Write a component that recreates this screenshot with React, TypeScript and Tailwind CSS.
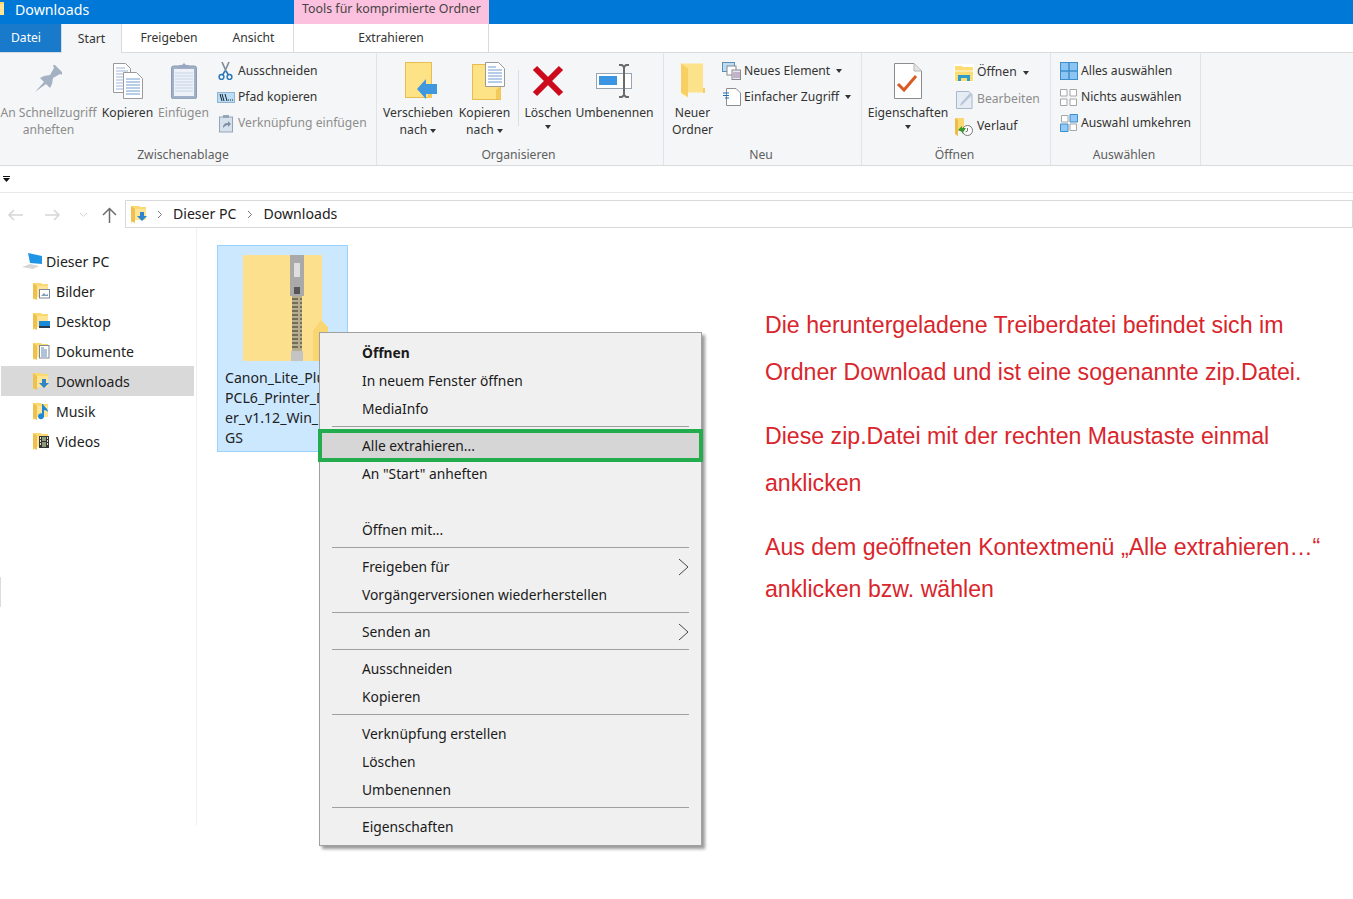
import React from "react";

function Folder({ w = 16, h = 18 }: { w?: number; h?: number }) {
  return (
    <svg width={w} height={h} viewBox="0 0 16 18">
      <path d="M0 1h8l1 1h6v13H4L0 18z" fill="#fbd971" />
      <path d="M0 1l4 3v14l-4-2z" fill="#f0c04e" />
      <path d="M4 4h11v11H4z" fill="#fde595" />
    </svg>
  );
}

function NavIcon({ kind }: { kind: string }) {
  return (
    <span className="relative inline-block w-[17px] h-[18px] shrink-0">
      <Folder />
      <svg className="absolute left-0 top-0" width="17" height="18" viewBox="0 0 17 18">
        {kind === "Bilder" && (<g><rect x="6.5" y="7.5" width="10" height="8.5" fill="#fff" stroke="#7c8894" /><path d="M8 14l3-3 2 2 2-1v2z" fill="#7f9fb8" /></g>)}
        {kind === "Desktop" && (<g><rect x="6" y="9" width="11" height="7" fill="#1a8ad8" /><rect x="6" y="14" width="11" height="2" fill="#233a50" /></g>)}
        {kind === "Dokumente" && (<g><rect x="6.5" y="3.5" width="9.5" height="12.5" fill="#fff" stroke="#7c8894" /><path d="M8 6h3M8 8h6M8 10h6M8 12h6M8 14h6" stroke="#5c88b0" /></g>)}
        {kind === "Downloads" && (<path d="M9 7h4v4h3l-5 5-5-5h3z" fill="#2f84d0" />)}
        {kind === "Musik" && (<path d="M9 2l1 0c1 3 5 4 5 8-1-1-2-2-4-2v6a3 3 0 1 1-2-2.500z" fill="#1e88d8" />)}
        {kind === "Videos" && (<g><rect x="6" y="4" width="10" height="12" fill="#343434" /><path d="M9 5h4v4H9zM9 10h4v5H9z" fill="#8d9a76" /><path d="M7 5h1v2H7zM7 8h1v2H7zM7 11h1v2H7zM14 5h1v2h-1zM14 8h1v2h-1zM14 11h1v2h-1z" fill="#ddd" /></g>)}
      </svg>
    </span>
  );
}

function Caret() {
  return <span className="inline-block w-0 h-0 border-x-[3.5px] border-x-transparent border-t-[4px] border-t-[#333] align-middle" />;
}
const LoneCaret = () => <span className="flex justify-center items-center h-[12px]"><Caret /></span>;

function IconPin() {
  return (
    <svg width="27" height="27" viewBox="0 0 27 27">
      <path d="M0 27l9-10-4-4 4-2 6-1 4-7-1-3 2 0 8 8 0 2-3-1-7 4-1 6-2 4-4-4z" fill="#a4b1c2" />
    </svg>
  );
}
function IconCopy() {
  return (
    <svg width="30" height="36" viewBox="0 0 30 36">
      <path d="M.5.5h12l5 5v24H.5z" fill="#fff" stroke="#9a9a9a" />
      <path d="M3 5h9M3 8h12M3 11h12M3 14h12M3 17h12M3 20h12M3 23h12M3 26h12" stroke="#9fb7d8" />
      <path d="M10.500 9.500h13l6 6v20h-19z" fill="#fff" stroke="#9a9a9a" />
      <path d="M13 16h14M13 19h14M13 22h14M13 25h14M13 28h14M13 31h14" stroke="#6f9bd1" />
    </svg>
  );
}
function IconPaste() {
  return (
    <svg width="26" height="36" viewBox="0 0 26 36">
      <rect x=".5" y="3" width="25" height="33" rx="2" fill="#9fb0c8" stroke="#8c9bb1" />
      <rect x="3" y="6" width="20" height="27" fill="#eef2f8" />
      <path d="M4 10h18M4 13h18M4 16h18M4 19h18M4 22h18M4 25h18M4 28h18" stroke="#c4d2e6" />
      <path d="M8 5V2h3l2-2 2 2h3v3z" fill="#9aa9bf" />
    </svg>
  );
}
function IconScissors() {
  return (
    <svg width="15" height="18" viewBox="0 0 15 18">
      <path d="M4 0l4 9M11 0L7 9" stroke="#7d8a99" strokeWidth="1.600" fill="none" />
      <path d="M8 9l2.500 4M7 9l-2.500 4" stroke="#2a78b8" strokeWidth="1.600" />
      <circle cx="3.500" cy="15" r="2.400" fill="none" stroke="#2a78b8" strokeWidth="1.500" />
      <circle cx="11.500" cy="15" r="2.400" fill="none" stroke="#2a78b8" strokeWidth="1.500" />
    </svg>
  );
}
function IconPath() {
  return (
    <svg width="18" height="11" viewBox="0 0 18 11">
      <rect x=".5" y=".5" width="17" height="10" fill="#bcdcf4" stroke="#8fb3d0" />
      <path d="M3 2l2 7M5 2l2 7M8 2l2 7" stroke="#123" strokeWidth="1" />
      <path d="M11 8h1M13 8h1M15 8h1" stroke="#123" />
    </svg>
  );
}
function IconShortcut() {
  return (
    <svg width="14" height="19" viewBox="0 0 14 19">
      <rect x=".5" y="3" width="13" height="15" fill="#d6e1ee" stroke="#94a5b8" />
      <rect x="4" y="1" width="6" height="3" fill="#94a5b8" />
      <path d="M4 14c0-4 2-5 5-5V7l3 3-3 3v-2c-2 0-3 1-5 3z" fill="#7f8fa3" />
    </svg>
  );
}
function IconMove() {
  return (
    <svg width="32" height="37" viewBox="0 0 32 37">
      <rect x=".5" y=".5" width="26" height="35" fill="#fde286" stroke="#e5bd52" />
      <path d="M23 32h4v4h-4z" fill="#f3c95a" />
      <path d="M12 27L21 17V22H32V32H21V37z" fill="#3f97df" />
    </svg>
  );
}
function IconCopyTo() {
  return (
    <svg width="33" height="38" viewBox="0 0 33 38">
      <rect x=".5" y="2.500" width="28" height="35" fill="#fde286" stroke="#e5bd52" />
      <path d="M24 37V28l3-3 2 3v9z" fill="#f3c95a" />
      <path d="M13.500.5h13l6 6v18h-19z" fill="#fff" stroke="#9a9a9a" />
      <path d="M16 5h8M16 8h14M16 11h14M16 14h14M16 17h14M16 20h14" stroke="#6f9bd1" />
    </svg>
  );
}
function IconDelete() {
  return (
    <svg width="32" height="32" viewBox="0 0 32 32">
      <path d="M3 3l26 26M29 3L3 29" stroke="#cc0a1c" strokeWidth="6" />
    </svg>
  );
}
function IconRename() {
  return (
    <svg width="37" height="34" viewBox="0 0 37 34">
      <rect x=".5" y="9.500" width="35" height="15" fill="#fff" stroke="#98a4b0" />
      <rect x="3" y="12" width="18" height="9" fill="#3a95e2" />
      <path d="M23 1h3l2 2 2-2h3M23 33h3l2-2 2 2h3M28 3v28" stroke="#6b6b6b" strokeWidth="2" fill="none" />
    </svg>
  );
}
function IconNewFolder() {
  return (
    <svg width="24" height="35" viewBox="0 0 24 35">
      <path d="M0 .5h22v29H7v5l-7-4z" fill="#fde28c" />
      <path d="M0 .5l7 5V34l-7-5z" fill="#f7cf63" />
      <path d="M22 25h2v5h-2z" fill="#f6cd63" />
    </svg>
  );
}
function IconNewItem() {
  return (
    <svg width="19" height="18" viewBox="0 0 19 18">
      <rect x=".5" y=".5" width="12" height="9" fill="#bcdcf4" stroke="#5d8fb5" />
      <rect x="5" y="4" width="9" height="9" fill="#fff" stroke="#8a8a8a" />
      <rect x="10" y="8" width="8.500" height="9.500" fill="#e6e6f4" stroke="#8a8a8a" />
      <path d="M11 11h7M11 13h7M11 15h7" stroke="#9d7f9f" />
    </svg>
  );
}
function IconEasy() {
  return (
    <svg width="18" height="18" viewBox="0 0 18 18">
      <path d="M3.500.5H13l4.500 4.500v12.500H3.500z" fill="#fff" stroke="#8d8d8d" />
      <path d="M0 5h6M0 7.500h6M2 10h4" stroke="#1a6eb5" />
    </svg>
  );
}
function IconProps() {
  return (
    <svg width="28" height="36" viewBox="0 0 28 36">
      <path d="M.5.5H20l7.500 7.500v27.500H.5z" fill="#fff" stroke="#8d8d8d" />
      <path d="M20 .5V8h7.500" fill="#e4e4e4" stroke="#b5b5b5" />
      <path d="M4 21l6 6L22 13" fill="none" stroke="#da5a24" strokeWidth="3" />
    </svg>
  );
}
function IconOpen() {
  return (
    <svg width="20" height="18" viewBox="0 0 20 18">
      <rect width="20" height="18" fill="#fff" />
      <path d="M1 2h7l1 1h10v14H1z" fill="#fddc72" />
      <path d="M1 6h18v2H1z" fill="#feeaa8" />
      <path d="M4 17v-6h12v6h-3v-3H7v3z" fill="#2b9dc8" />
    </svg>
  );
}
function IconEdit() {
  return (
    <svg width="17" height="18" viewBox="0 0 17 18">
      <path d="M.5.500H13l3 3v14H.5z" fill="#e6ecf4" stroke="#a9b8cc" />
      <path d="M4 15l1-3 9-10 2 2-9 9z" fill="#b8c5d6" />
    </svg>
  );
}
function IconHistory() {
  return (
    <svg width="18" height="18" viewBox="0 0 18 18">
      <path d="M0 0h9v13H3v5l-3-2z" fill="#fbd971" />
      <path d="M0 0l3 2v16l-3-2z" fill="#eebc4a" />
      <circle cx="12.500" cy="12.500" r="5" fill="#fff" stroke="#777" />
      <path d="M12.500 10v3l-2 1" fill="none" stroke="#777" />
      <path d="M3 12l4-4v2h4l-4 6v-2z" fill="#3a9a2c" />
    </svg>
  );
}
function IconAll() {
  return (
    <svg width="18" height="18" viewBox="0 0 18 18">
      <rect x=".5" y=".5" width="17" height="17" fill="#8cc5f2" stroke="#3e8ecb" />
      <path d="M9 0v18M0 9h18" stroke="#3e8ecb" strokeWidth="1.500" />
    </svg>
  );
}
function IconNone() {
  return (
    <svg width="17" height="17" viewBox="0 0 17 17">
      <path d="M.5.500h6.500v6.500H.5zM10 .5h6.500v6.500H10zM.5 10h6.500v6.500H.5zM10 10h6.500v6.500H10z" fill="#fff" stroke="#a6a6a6" />
    </svg>
  );
}
function IconInvert() {
  return (
    <svg width="18" height="18" viewBox="0 0 18 18">
      <path d="M1.500 1.500h6.500v6.500H1.500zM10 10h6.500v6.500H10z" fill="#fff" stroke="#a6a6a6" />
      <path d="M10 .5h7.500v7.500H10zM.5 10H8v7.500H.5z" fill="#93c9f4" stroke="#3e8ecb" />
    </svg>
  );
}

function Big({ icon, lines, w, muted }: { icon: React.ReactNode; lines: React.ReactNode[]; w: string; muted?: boolean }) {
  return (
    <div className={`${w} shrink-0 flex flex-col items-center`}>
      <div className="h-[47px] -mt-[1px] flex items-center justify-center">{icon}</div>
      <div className={`${muted ? "text-[#8d8d8d]" : "text-[#333]"} text-center leading-[17px] whitespace-nowrap`}>
        {lines.map((l, i) => (<div key={i}>{l}</div>))}
      </div>
    </div>
  );
}

function Small({ icon, label, muted, caret, iconW = "w-[19px]", h = "h-[26px]" }: { icon: React.ReactNode; label: string; muted?: boolean; caret?: boolean; iconW?: string; h?: string }) {
  return (
    <div className={`${h} flex items-center gap-[3px] whitespace-nowrap ${muted ? "text-[#8d8d8d]" : "text-[#333]"}`}>
      <span className={`${iconW} flex justify-center shrink-0`}>{icon}</span>
      <span>{label}</span>
      {caret && <span className="ml-[3px] flex"><Caret /></span>}
    </div>
  );
}

function Group({ w, label, children, labelPad = "pr-[3px]" }: { w: string; label: string; children: React.ReactNode; labelPad?: string }) {
  return (
    <div className={`${w} shrink-0 h-full flex flex-col border-r border-[#e1e3e6] pt-[5px] pb-[2px]`}>
      <div className="flex-1 flex">{children}</div>
      <div className={`text-center text-[#5e5e5e] leading-[17px] h-[17px] ${labelPad}`}>{label}</div>
    </div>
  );
}

const Sep = () => <div className="border-t border-[#a0a0a0] mx-[12px] mt-[3px] mb-[5px]" />;
const MI = ({ t, bold, arrow }: { t: string; bold?: boolean; arrow?: boolean }) => (
  <div className={`h-[28px] flex items-center pl-[42px] pr-[12px] justify-between text-[#1a1a1a] ${bold ? "font-bold" : ""}`}>
    <span>{t}</span>
    {arrow && (
      <svg className="-mt-[1px]" width="11" height="18" viewBox="0 0 11 18"><path d="M1 1l9 8-9 8" fill="none" stroke="#444" strokeWidth="1" /></svg>
    )}
  </div>
);

export default function App() {
  const ui = "font-['Noto_Sans',sans-serif] text-[12.15px]";
  return (
    <div className={`relative w-[1353px] h-[899px] overflow-hidden bg-white ${ui}`}>
      <div className="h-[24px] bg-[#0078d7] flex items-start">
        <span className="w-[15px] h-[18px] overflow-hidden shrink-0 flex pl-0"><span className="-ml-[11px] shrink-0 flex"><Folder /></span></span>
        <span className="text-white text-[14.2px] leading-[20px] w-[279px]">Downloads</span>
        <div className="w-[195px] h-[24px] bg-[#fcc1de] text-[#444] leading-[17px] pl-[8px] text-[12.4px]">Tools für komprimierte Ordner</div>
      </div>
      <div className="h-[29px] flex border-b border-[#dadbdc] text-[#333]">
        <div className="w-[61px] bg-[#1979ca] text-white flex items-center justify-center h-[28px] pr-[9px] pt-[1px]">Datei</div>
        <div className="w-[61px] h-[29px] bg-[#f5f6f7] border-x border-[#dadbdc] flex items-center justify-center relative z-10 pt-[1px]">Start</div>
        <div className="w-[94px] flex items-center justify-center pt-[1px]">Freigeben</div>
        <div className="w-[75px] flex items-center justify-center pt-[1px]">Ansicht</div>
        <div className="w-[3px] border-r border-[#dadbdc]" />
        <div className="w-[195px] border-r border-[#dadbdc] flex items-center justify-center pt-[1px]">Extrahieren</div>
      </div>
      <div className="h-[113px] bg-[#f5f6f7] border-b border-[#dadbdc] flex">
        <Group w="w-[377px]" label="Zwischenablage" labelPad="pr-[10px]">
          <Big w="w-[97px]" muted icon={<span className="-mt-[5px] flex"><IconPin /></span>} lines={["An Schnellzugriff", "anheften"]} />
          <Big w="w-[61px]" icon={<IconCopy />} lines={["Kopieren"]} />
          <Big w="w-[51px]" muted icon={<IconPaste />} lines={["Einfügen"]} />
          <div className="ml-[7px] flex flex-col">
            <Small icon={<IconScissors />} label="Ausschneiden" />
            <Small icon={<IconPath />} label="Pfad kopieren" />
            <Small muted icon={<IconShortcut />} label="Verknüpfung einfügen" />
          </div>
        </Group>
        <Group w="w-[287px]" label="Organisieren">
          <Big w="w-[82px]" icon={<span className="ml-[6px] flex"><IconMove /></span>} lines={["Verschieben", <>nach <Caret /></>]} />
          <Big w="w-[51px]" icon={<span className="ml-[8px] flex"><IconCopyTo /></span>} lines={["Kopieren", <>nach <Caret /></>]} />
          <div className="w-px h-[56px] bg-[#dcdee1] ml-[8px] mr-[2px] mt-[12px] shrink-0" />
          <Big w="w-[54px]" icon={<IconDelete />} lines={["Löschen", <LoneCaret />]} />
          <Big w="w-[79px]" icon={<IconRename />} lines={["Umbenennen"]} />
        </Group>
        <Group w="w-[198px]" label="Neu">
          <Big w="w-[57px]" icon={<IconNewFolder />} lines={["Neuer", "Ordner"]} />
          <div className="flex flex-col ml-[1px]">
            <Small icon={<IconNewItem />} label="Neues Element" caret />
            <Small icon={<IconEasy />} label="Einfacher Zugriff" caret />
          </div>
        </Group>
        <Group w="w-[189px]" label="Öffnen">
          <Big w="w-[92px]" icon={<IconProps />} lines={["Eigenschaften", <LoneCaret />]} />
          <div className="flex flex-col pt-[1px]">
            <Small h="h-[27px]" iconW="w-[20px]" icon={<IconOpen />} label="Öffnen" caret />
            <Small h="h-[27px]" muted iconW="w-[20px]" icon={<IconEdit />} label="Bearbeiten" />
            <Small h="h-[27px]" iconW="w-[20px]" icon={<IconHistory />} label="Verlauf" />
          </div>
        </Group>
        <Group w="w-[150px]" label="Auswählen">
          <div className="flex flex-col pl-[8px]">
            <Small icon={<IconAll />} label="Alles auswählen" />
            <Small icon={<IconNone />} label="Nichts auswählen" />
            <Small icon={<IconInvert />} label="Auswahl umkehren" />
          </div>
        </Group>
      </div>
      <div className="h-[27px] border-b border-[#e8e8e8] flex items-center pl-[3px]">
        <svg width="7" height="6" viewBox="0 0 7 6"><path d="M0 0h7v1H0zM0 2h7L3.500 6z" fill="#111" /></svg>
      </div>
      <div className="h-[35px] flex items-start pt-[7px]">
        <div className="w-[125px] h-[28px] flex items-center shrink-0 pl-[7px] pt-[1px]">
          <svg width="16" height="14" viewBox="0 0 16 14"><path d="M16 7H2M7 2L2 7l5 5" fill="none" stroke="#d6d6d6" strokeWidth="1.500" /></svg>
          <svg className="ml-[22px]" width="16" height="14" viewBox="0 0 16 14"><path d="M0 7h14M9 2l5 5-5 5" fill="none" stroke="#d6d6d6" strokeWidth="1.500" /></svg>
          <svg className="ml-[18px]" width="9" height="6" viewBox="0 0 9 6"><path d="M1 1l3.500 3.500L8 1" fill="none" stroke="#d6d6d6" /></svg>
          <svg className="ml-[14px]" width="15" height="16" viewBox="0 0 15 16"><path d="M7.500 16V2M1 8l6.500-6.500L14 8" fill="none" stroke="#6d6d6d" strokeWidth="1.500" /></svg>
        </div>
        <div className="flex-1 h-[28px] border border-[#d9d9d9] flex items-center text-[14.1px] text-[#222] pl-[5px]">
          <span className="relative w-[17px] h-[18px]"><Folder /><svg className="absolute left-0 top-0" width="17" height="18" viewBox="0 0 17 18"><path d="M9 7h4v4h3l-5 5-5-5h3z" fill="#2f84d0" /></svg></span>
          <svg className="ml-[9px]" width="6" height="9" viewBox="0 0 6 9"><path d="M1 1l3.500 3.500L1 8" fill="none" stroke="#777" /></svg>
          <span className="ml-[10px]">Dieser PC</span>
          <svg className="ml-[10px]" width="6" height="9" viewBox="0 0 6 9"><path d="M1 1l3.500 3.500L1 8" fill="none" stroke="#777" /></svg>
          <span className="ml-[11px]">Downloads</span>
        </div>
      </div>
      <div className="flex h-[671px] text-[14.1px] text-[#222]">
        <div className="w-[197px] h-[597px] border-r border-[#f0f0f0] shrink-0 pt-[18px]">
          <div className="h-[30px] flex items-center pl-[22px] gap-[4px]">
            <svg width="20" height="18" viewBox="0 0 20 18">
              <path d="M6 1l14 3v8L8 11z" fill="#1f95e6" />
              <path d="M0 15l8-3 9 2-6 3z" fill="#d6d6d6" />
            </svg>
            <span className="mt-[2px]">Dieser PC</span>
          </div>
          {["Bilder", "Desktop", "Dokumente", "Downloads", "Musik", "Videos"].map((n) => (
            <div key={n} className={`h-[30px] flex items-center pl-[32px] gap-[6px] ml-[1px] mr-[2px] ${n === "Downloads" ? "bg-[#d9d9d9]" : ""}`}>
              <NavIcon kind={n} />
              <span className="mt-[2px]">{n}</span>
            </div>
          ))}
        </div>
        <div className="pl-[20px] pt-[17px] w-[548px] shrink-0">
          <div className="w-[131px] h-[207px] bg-[#cce8ff] border border-[#99d1ff] overflow-hidden">
            <div className="h-[119px] pl-[25px] pt-[9px]">
              <svg width="86" height="106" viewBox="0 0 86 106">
                <rect x="0" y="0" width="79" height="106" rx="1" fill="#fce08e" />
                <path d="M70 76L78 65l7 7v34H70z" fill="#f9d66f" />
                <rect x="47" y="0" width="14" height="41" fill="#a9a9a9" />
                <rect x="51" y="8" width="6" height="14" fill="#dedede" />
                <rect x="51" y="32" width="6" height="7" fill="#555" />
                <path d="M49 41h10v55H49z" fill="#b5ad8f" />
                <path d="M49 44h10M49 48h10M49 52h10M49 56h10M49 60h10M49 64h10M49 68h10M49 72h10M49 76h10M49 80h10M49 84h10M49 88h10M49 92h10" stroke="#5f5a48" strokeWidth="1.500" strokeDasharray="6 2" />
                <rect x="48" y="96" width="12" height="10" fill="#c4c4c4" />
              </svg>
            </div>
            <div className="pl-[7px] leading-[20px] whitespace-nowrap mt-[3px]">
              <div>Canon_Lite_Plus_</div>
              <div>PCL6_Printer_Driv</div>
              <div>er_v1.12_Win_Blue</div>
              <div>GS</div>
            </div>
          </div>
        </div>
        <div className="pt-[74px] pl-[20px] text-[#d9252c] font-['Liberation_Sans',sans-serif] text-[23.15px] whitespace-nowrap">
          <p className="leading-[46.500px]">Die heruntergeladene Treiberdatei befindet sich im</p>
          <p className="leading-[46.500px]">Ordner Download und ist eine sogenannte zip.Datei.</p>
          <p className="leading-[46.500px] mt-[18px]">Diese zip.Datei mit der rechten Maustaste einmal</p>
          <p className="leading-[46.500px]">anklicken</p>
          <p className="leading-[42px] mt-[20px]">Aus dem geöffneten Kontextmenü „Alle extrahieren…“</p>
          <p className="leading-[42px]">anklicken bzw. wählen</p>
        </div>
      </div>
      <div className="absolute left-0 top-[577px] w-px h-[30px] bg-[#dcdcdc]" />
      <div className="absolute left-[319px] top-[332px] w-[383px] h-[514px] bg-[#f0f0f0] border border-[#a0a0a0] shadow-[3px_3px_3px_rgba(0,0,0,0.4)] text-[13.8px] pt-[6px]">
        <MI t="Öffnen" bold />
        <MI t="In neuem Fenster öffnen" />
        <MI t="MediaInfo" />
        <Sep />
        <div className="relative -ml-[2px] -mr-[2px] h-[33px] border-[4px] border-[#22ac4e] bg-[#d6d6d6] flex items-center pl-[40px] text-[#1a1a1a] -mt-[3px] -mb-[2px] pt-[1px]">Alle extrahieren...</div>
        <MI t={'An "Start" anheften'} />
        <div className="h-[28px]" />
        <MI t="Öffnen mit..." />
        <Sep />
        <MI t="Freigeben für" arrow />
        <MI t="Vorgängerversionen wiederherstellen" />
        <Sep />
        <MI t="Senden an" arrow />
        <Sep />
        <MI t="Ausschneiden" />
        <MI t="Kopieren" />
        <Sep />
        <MI t="Verknüpfung erstellen" />
        <MI t="Löschen" />
        <MI t="Umbenennen" />
        <Sep />
        <MI t="Eigenschaften" />
      </div>
    </div>
  );
}
